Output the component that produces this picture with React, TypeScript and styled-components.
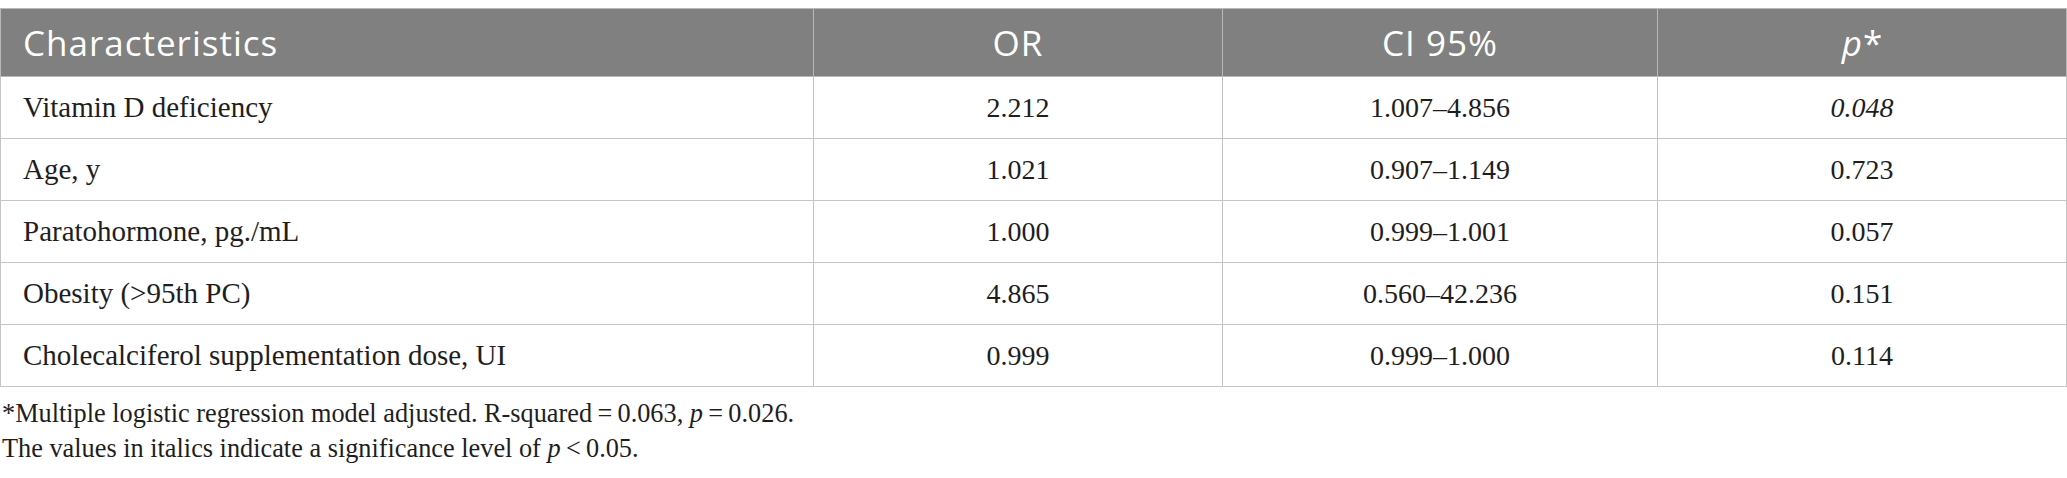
import React from "react";
import styled, { createGlobalStyle } from "styled-components";

const Global = createGlobalStyle`
  html, body { margin: 0; padding: 0; background: #ffffff; }
  body { padding-top: 8px; }
`;

const Wrapper = styled.div`
  width: 2067px;
`;

const Table = styled.table`
  width: 2066px;
  border-collapse: collapse;
  table-layout: fixed;
  font-family: "Liberation Serif", "Times New Roman", serif;
  color: #1e1e1e;
`;

const HeadCell = styled.th<{ $align?: "left" | "center" }>`
  background: #7f807f;
  color: #ffffff;
  font-family: "Open Sans", "Noto Sans", sans-serif;
  font-weight: 400;
  font-size: 35px;
  letter-spacing: 1px;
  height: 67px;
  padding: 0 22px;
  text-align: ${(p) => p.$align ?? "center"};
  border: 1px solid #b8b8b8;
  vertical-align: middle;
  line-height: 1;
`;

const Row = styled.tr`
  height: 62px;
`;

const Cell = styled.td<{ $label?: boolean; $italic?: boolean }>`
  font-size: ${(p) => (p.$label ? "29px" : "28px")};
  padding: 0 22px;
  text-align: ${(p) => (p.$label ? "left" : "center")};
  font-style: ${(p) => (p.$italic ? "italic" : "normal")};
  border: 1px solid #c4c4c4;
  vertical-align: middle;
  line-height: 1;
`;

const Notes = styled.div`
  font-family: "Liberation Serif", "Times New Roman", serif;
  font-size: 26.3px;
  line-height: 35px;
  color: #1e1e1e;
  padding: 9px 2px 0;
`;

const Note = styled.p`
  margin: 0;
`;

const It = styled.i`
  font-style: italic;
`;

const Sym = styled.span`
  letter-spacing: 0;
`;

const rows = [
  { name: "Vitamin D deficiency", or: "2.212", ci: "1.007–4.856", p: "0.048", sig: true },
  { name: "Age, y", or: "1.021", ci: "0.907–1.149", p: "0.723" },
  { name: "Paratohormone, pg./mL", or: "1.000", ci: "0.999–1.001", p: "0.057" },
  { name: "Obesity (>95th PC)", or: "4.865", ci: "0.560–42.236", p: "0.151" },
  { name: "Cholecalciferol supplementation dose, UI", or: "0.999", ci: "0.999–1.000", p: "0.114" },
];

export default function App() {
  return (
    <Wrapper>
      <Global />
      <Table>
        <colgroup>
          <col style={{ width: 813 }} />
          <col style={{ width: 409 }} />
          <col style={{ width: 435 }} />
          <col style={{ width: 409 }} />
        </colgroup>
        <thead>
          <tr>
            <HeadCell $align="left">Characteristics</HeadCell>
            <HeadCell>OR</HeadCell>
            <HeadCell>CI 95%</HeadCell>
            <HeadCell>
              <It>p</It>
              <Sym>*</Sym>
            </HeadCell>
          </tr>
        </thead>
        <tbody>
          {rows.map((r) => (
            <Row key={r.name}>
              <Cell $label>{r.name}</Cell>
              <Cell>{r.or}</Cell>
              <Cell>{r.ci}</Cell>
              <Cell $italic={r.sig}>{r.p}</Cell>
            </Row>
          ))}
        </tbody>
      </Table>
      <Notes>
        <Note>
          *Multiple logistic regression model adjusted. R-squared{"\u2009"}={"\u2009"}0.063, <It>p</It>
          {"\u2009"}={"\u2009"}0.026.
        </Note>
        <Note>
          The values in italics indicate a significance level of <It>p</It>
          {"\u2009"}&lt;{"\u2009"}0.05.
        </Note>
      </Notes>
    </Wrapper>
  );
}
